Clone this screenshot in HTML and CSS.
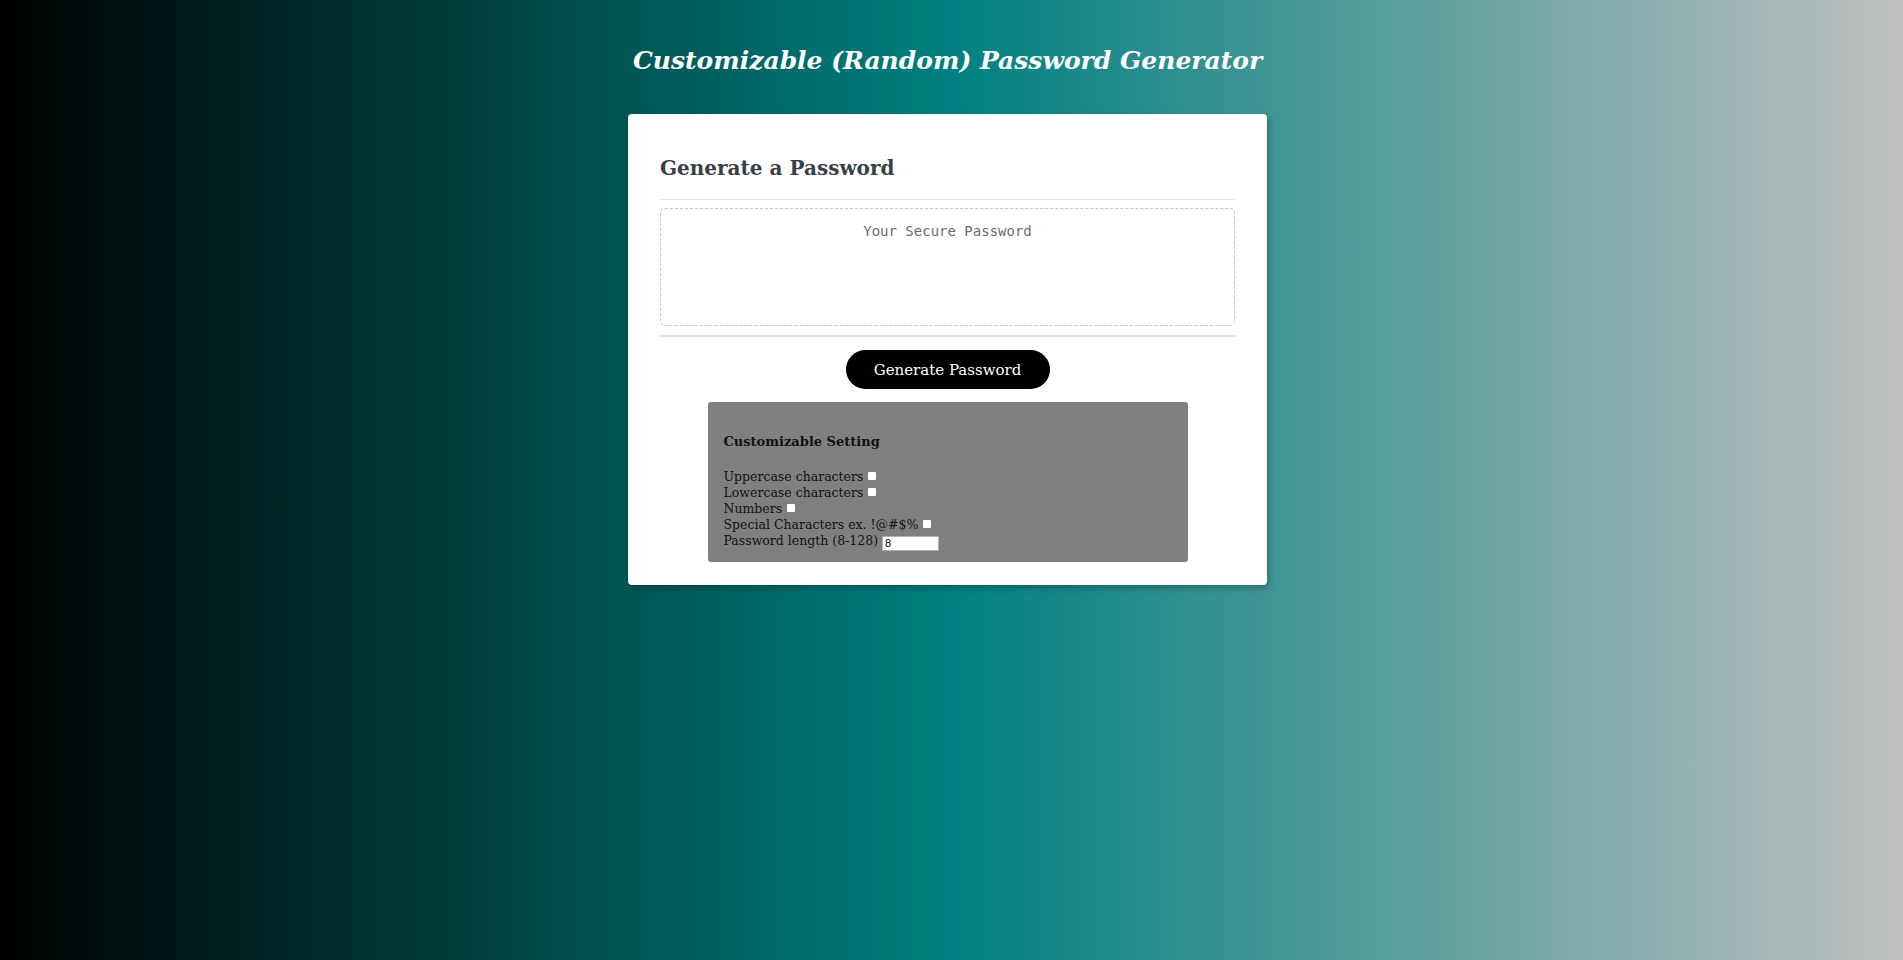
FILE: index.html
```html
<!DOCTYPE html>
<html lang="en">
<head>
<meta charset="utf-8">
<title>Password Generator</title>
<link rel="stylesheet" href="styles.css">
</head>
<body>
<div class="wrapper">
  <header class="page-header">
    <h1 class="title">Customizable (Random) Password Generator</h1>
  </header>
  <div class="card">
    <div class="card-header">
      <h2 class="card-title">Generate a Password</h2>
    </div>
    <div class="card-body">
      <textarea class="password" readonly placeholder="Your Secure Password"></textarea>
    </div>
    <div class="card-footer">
      <button class="btn">Generate Password</button>
      <div class="settings">
        <h4 class="settings-title">Customizable Setting</h4>
        <div class="row">Uppercase characters <input class="check" type="checkbox"></div>
        <div class="row">Lowercase characters <input class="check" type="checkbox"></div>
        <div class="row">Numbers <input class="check" type="checkbox"></div>
        <div class="row">Special Characters ex. !@#$% <input class="check" type="checkbox"></div>
        <div class="row">Password length (8-128) <input class="length" type="text" value="8"></div>
      </div>
    </div>
  </div>
</div>
</body>
</html>
```

FILE: styles.css
```css
html, body {
  margin: 0;
  padding: 0;
  height: 100%;
}

body {
  background: linear-gradient(to right, #000000, #008080, #c0c0c0);
  font-family: "DejaVu Serif", "Liberation Serif", serif;
}

.wrapper {
  display: flex;
  flex-direction: column;
  align-items: center;
  padding-right: 8px;
}

.page-header {
  padding-top: 45px;
}

.title {
  margin: 0;
  font-size: 25px;
  line-height: 32px;
  font-style: italic;
  font-weight: bold;
  color: #ffffff;
  text-align: center;
}

.card {
  margin-top: 37px;
  width: 639px;
  box-sizing: border-box;
  background: #ffffff;
  border-radius: 4px;
  padding: 0 32px 23px;
  box-shadow: 2px 3px 6px rgba(0, 0, 0, 0.25);
}

.card-header {
  padding: 39px 0 16px;
  border-bottom: 1px solid #e6e6e6;
}

.card-title {
  margin: 0;
  font-size: 20px;
  line-height: 30px;
  font-weight: bold;
  color: #3a3f47;
}

.card-body {
  padding-top: 8px;
  padding-bottom: 9px;
  border-bottom: 2px solid #e2e2e2;
}

.password {
  display: block;
  width: 100%;
  height: 118px;
  box-sizing: border-box;
  border: 1px dashed #c4c4c4;
  border-radius: 5px;
  padding: 13px 10px;
  resize: none;
  text-align: center;
  font-family: "DejaVu Sans Mono", "Liberation Mono", monospace;
  font-size: 14px;
  line-height: 18px;
  color: #555555;
  background: #ffffff;
  outline: none;
}

.password::placeholder {
  color: #6b6b6b;
}

.card-footer {
  display: flex;
  flex-direction: column;
  align-items: center;
  padding-top: 13px;
  gap: 13px;
}

.btn {
  width: 204px;
  height: 39px;
  border: none;
  border-radius: 20px;
  background: #000000;
  color: #ffffff;
  font-family: "DejaVu Serif", "Liberation Serif", serif;
  font-size: 15px;
  padding: 0;
}

.settings {
  width: 480px;
  height: 160px;
  box-sizing: border-box;
  background: #808080;
  border-radius: 3px;
  padding: 31px 16px 0;
  color: #111111;
  font-size: 12.5px;
  line-height: 16px;
}

.settings-title {
  margin: 0 0 18px;
  font-size: 13px;
  line-height: 18px;
  font-weight: bold;
}

.row {
  height: 16px;
  white-space: nowrap;
}

.check {
  -webkit-appearance: none;
  appearance: none;
  width: 8px;
  height: 8px;
  margin: 0 0 0 1px;
  background: #ffffff;
  border: none;
  border-radius: 1px;
  vertical-align: 1px;
}

.length {
  width: 57px;
  height: 15px;
  box-sizing: border-box;
  margin: 0;
  padding: 0 2px;
  border: 1px solid #b0b0b0;
  background: #ffffff;
  font-family: "Liberation Sans", Arial, sans-serif;
  font-size: 11px;
  vertical-align: -2px;
  outline: none;
}
```
